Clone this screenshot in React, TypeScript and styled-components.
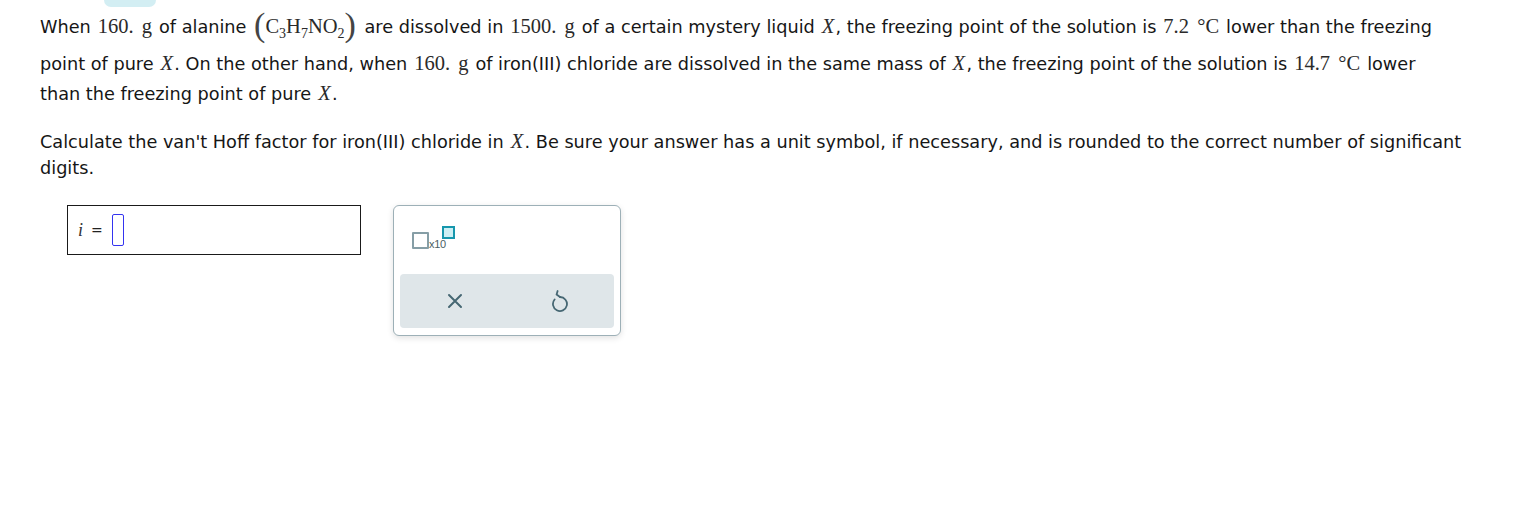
import React from "react";
import styled, { createGlobalStyle } from "styled-components";

const Global = createGlobalStyle`
  html, body { margin: 0; padding: 0; background: #fff; }
  body { font-family: "DejaVu Sans", Verdana, sans-serif; color: #161616; }
`;

const Page = styled.div`
  width: 1513px;
  height: 509px;
  padding: 0 20px 0 40px;
  box-sizing: border-box;
`;

const Tab = styled.div`
  width: 52px;
  height: 7px;
  margin-left: 64px;
  border-radius: 0 0 8px 8px;
  background: #d3eef3;
`;

const Para = styled.div<{ $top: number }>`
  margin-top: ${(p) => p.$top}px;
  font-size: 17.7px;
`;

const Line = styled.div<{ $h: number; $gap?: number }>`
  height: ${(p) => p.$h}px;
  line-height: ${(p) => p.$h}px;
  margin-bottom: ${(p) => p.$gap ?? 0}px;
  white-space: nowrap;
`;

const M = styled.span<{ $i?: boolean }>`
  font-family: "Liberation Serif", "Times New Roman", serif;
  font-size: 20.5px;
  line-height: 0;
  margin: 0 1.3px;
  font-style: ${(p) => (p.$i ? "italic" : "normal")};
  color: #2a2a2a;
`;

const Formula = styled.span`
  font-family: "Liberation Serif", "Times New Roman", serif;
  font-size: 20.5px;
  line-height: 0;
  margin: 0 3px 0 2px;
  color: #2a2a2a;
`;

const Paren = styled.span`
  font-size: 34px;
  line-height: 0;
  vertical-align: -3px;
  color: #444;
`;

const Sub = styled.span`
  font-size: 14px;
  line-height: 0;
  vertical-align: -5px;
`;

const Row = styled.div`
  display: flex;
  align-items: flex-start;
  gap: 32px;
  margin: 24px 0 0 27px;
`;

const AnswerBox = styled.div`
  width: 294px;
  height: 50px;
  box-sizing: border-box;
  border: 1px solid #1a1a1a;
  display: flex;
  align-items: center;
  padding-left: 10px;
`;

const VarI = styled.span`
  font-family: "Liberation Serif", "Times New Roman", serif;
  font-style: italic;
  font-size: 18px;
  color: #333;
`;

const Eq = styled.span`
  font-family: "DejaVu Sans", Verdana, sans-serif;
  font-size: 14px;
  margin: 0 9px 0 8px;
  color: #222;
`;

const Cursor = styled.span`
  display: inline-block;
  width: 10px;
  height: 30px;
  border: 1.5px solid #3434f0;
  border-radius: 2px;
`;

const Panel = styled.div`
  width: 228px;
  height: 131px;
  box-sizing: border-box;
  border: 1px solid #9db0b7;
  border-radius: 6px;
  box-shadow: 0 2px 6px rgba(0, 0, 0, 0.12);
  padding: 20px 6px 7px 6px;
  display: flex;
  flex-direction: column;
  justify-content: space-between;
  background: #fff;
`;

const SciBtn = styled.div`
  display: flex;
  align-items: flex-end;
  height: 24px;
  margin-left: 12px;
`;

const BigSq = styled.span`
  width: 13px;
  height: 13px;
  margin-bottom: 1px;
  border: 2px solid #869ea6;
  border-radius: 1px;
`;

const SmallSq = styled.span`
  align-self: flex-start;
  width: 9px;
  height: 9px;
  margin-left: -4px;
  border: 2px solid #1697ad;
  background: #cdeff4;
`;

const X10 = styled.span`
  font-family: "Liberation Sans", Arial, sans-serif;
  font-size: 11px;
  line-height: 11px;
  color: #4a5d63;
  letter-spacing: -0.3px;
`;

const ActionBar = styled.div`
  height: 54px;
  border-radius: 4px;
  background: #dfe6e9;
  display: flex;
  align-items: center;
  justify-content: space-around;
  padding: 0 2px;
`;

const IconBtn = styled.button`
  border: none;
  background: transparent;
  padding: 0;
  width: 22px;
  height: 22px;
  display: flex;
  align-items: center;
  justify-content: center;
  color: #466773;
`;

export default function App() {
  return (
    <>
      <Global />
      <Page>
        <Tab />
        <Para $top={5}>
          <Line $h={30} $gap={7}>
            When <M>160.</M> <M>g</M> of alanine{" "}
            <Formula>
              <Paren>(</Paren>C<Sub>3</Sub>H<Sub>7</Sub>NO<Sub>2</Sub>
              <Paren>)</Paren>
            </Formula>{" "}
            are dissolved in <M>1500.</M> <M>g</M> of a certain mystery liquid <M $i>X</M>, the freezing point of
            the solution is <M>7.2</M> <M>°C</M> lower than the freezing
          </Line>
          <Line $h={30}>
            point of pure <M $i>X</M>. On the other hand, when <M>160.</M> <M>g</M> of iron(III) chloride are
            dissolved in the same mass of <M $i>X</M>, the freezing point of the solution is <M>14.7</M> <M>°C</M>{" "}
            lower
          </Line>
          <Line $h={30}>
            than the freezing point of pure <M $i>X</M>.
          </Line>
        </Para>
        <Para $top={20}>
          <Line $h={26}>
            Calculate the van't Hoff factor for iron(III) chloride in <M $i>X</M>. Be sure your answer has a unit
            symbol, if necessary, and is rounded to the correct number of significant
          </Line>
          <Line $h={26}>digits.</Line>
        </Para>
        <Row>
          <AnswerBox>
            <VarI>i</VarI>
            <Eq>=</Eq>
            <Cursor />
          </AnswerBox>
          <Panel>
            <SciBtn>
              <BigSq />
              <X10>x10</X10>
              <SmallSq />
            </SciBtn>
            <ActionBar>
              <IconBtn aria-label="clear">
                <svg width="16" height="16" viewBox="0 0 16 16" fill="none" stroke="currentColor" strokeWidth="2" strokeLinecap="round">
                  <path d="M2 2 L14 14 M14 2 L2 14" />
                </svg>
              </IconBtn>
              <IconBtn aria-label="undo">
                <svg width="18" height="22" viewBox="0 0 18 22" fill="none" stroke="currentColor" strokeWidth="1.8" strokeLinecap="round" strokeLinejoin="round">
                  <path d="M9 7 A7 7 0 1 1 3.6 9.5" />
                  <path d="M9 7 L5.6 4.6 M5.6 4.6 L6.6 1" />
                </svg>
              </IconBtn>
            </ActionBar>
          </Panel>
        </Row>
      </Page>
    </>
  );
}
